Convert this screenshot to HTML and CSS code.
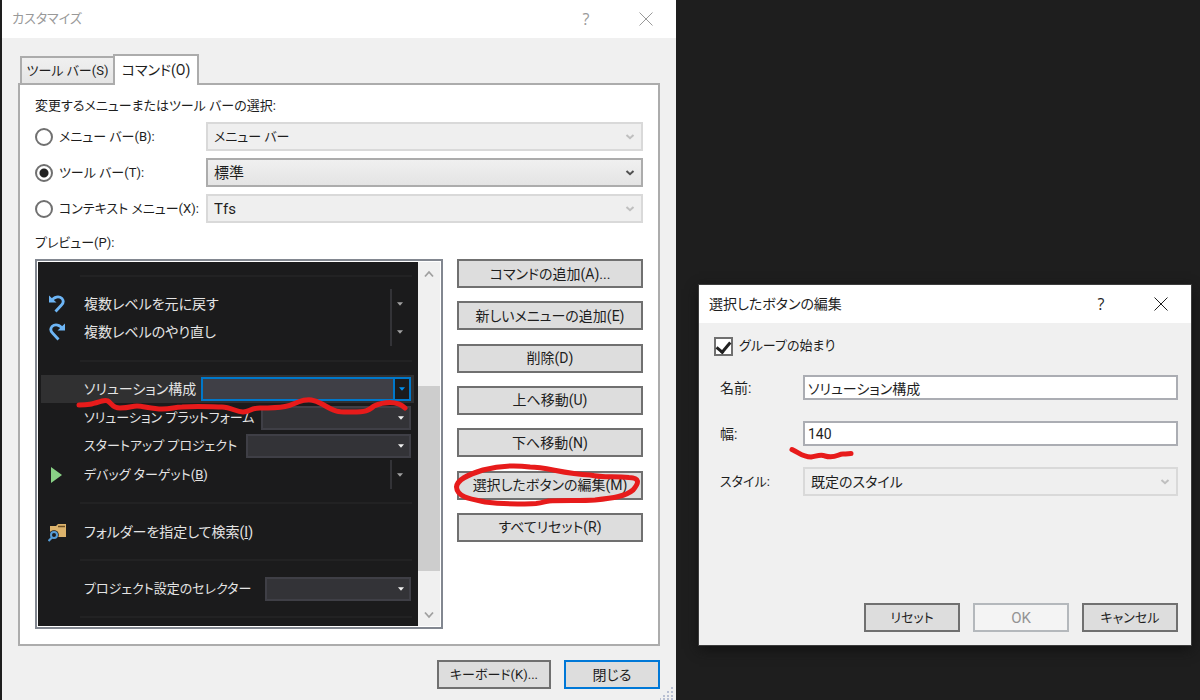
FILE: index.html
```html
<!DOCTYPE html>
<html lang="ja">
<head>
<meta charset="utf-8">
<title>カスタマイズ</title>
<link rel="stylesheet" href="styles.css">
</head>
<body>
<svg class="defs" aria-hidden="true">
  <symbol id="chevron" viewBox="0 0 10 8"><path d="M1.5 2 5 5.2 8.500 2" fill="none" stroke="currentColor" stroke-width="2"/></symbol>
  <symbol id="triangle" viewBox="0 0 6 4"><path d="M0 .3h6L3 3.700z" fill="currentColor"/></symbol>
  <symbol id="close" viewBox="0 0 14 14"><path d="M.5.5l13 13M13.500.5l-13 13" fill="none" stroke="currentColor" stroke-width="1"/></symbol>
  <symbol id="undo" viewBox="0 0 18 20"><path d="M3.500 7C6 2.500 11 1.800 14 4.500c2 2.500 1.500 4.500-.5 6.500L7.500 17.500" fill="none" stroke="currentColor" stroke-width="2.800"/><path d="M1 1.500v7h7.500z" fill="currentColor"/></symbol>
</svg>
<main class="desktop">
  <section class="dialog dialog-main" aria-labelledby="t1">
    <header class="titlebar inactive">
      <h1 id="t1" class="compact">カスタマイズ</h1>
      <button class="caption" aria-label="ヘルプ">?</button>
      <button class="caption" aria-label="閉じる"><svg class="close"><use href="#close"/></svg></button>
    </header>
    <div class="main-body">
      <div class="tabs" role="tablist">
        <button class="tab compact" role="tab">ツール バー(S)</button>
        <button class="tab active" role="tab" aria-selected="true">コマンド(O)</button>
      </div>
      <div class="panel" role="tabpanel">
        <p class="heading compact">変更するメニューまたはツール バーの選択:</p>
        <div class="choices compact">
          <label class="choice"><input type="radio" name="bar"><span>メニュー バー(B):</span></label>
          <div class="combo"><select aria-label="メニュー バー" disabled><option>メニュー バー</option></select><svg><use href="#chevron"/></svg></div>
          <label class="choice"><input type="radio" name="bar" checked><span>ツール バー(T):</span></label>
          <div class="combo enabled"><select class="regular" aria-label="ツール バー"><option>標準</option></select><svg><use href="#chevron"/></svg></div>
          <label class="choice"><input type="radio" name="bar"><span>コンテキスト メニュー(X):</span></label>
          <div class="combo"><select class="regular" aria-label="コンテキスト メニュー" disabled><option>Tfs</option></select><svg><use href="#chevron"/></svg></div>
        </div>
        <p class="preview-label compact">プレビュー(P):</p>
        <div class="commands">
          <div class="preview">
            <div class="list">
              <hr>
              <div class="item"><svg class="icon blue"><use href="#undo"/></svg><span>複数レベルを元に戻す</span><span class="split"><svg><use href="#triangle"/></svg></span></div>
              <div class="item"><svg class="icon blue flip"><use href="#undo"/></svg><span>複数レベルのやり直し</span><span class="split"><svg><use href="#triangle"/></svg></span></div>
              <hr>
              <div class="item selected">
                <label for="config">ソリューション構成</label>
                <div class="dark-combo w210 focus"><select id="config"></select><span class="drop"><svg><use href="#triangle"/></svg></span></div>
                <svg class="mark mark-row" viewBox="73 395 337 20"><path d="M79 405C90 405 92 404 102 401S109 408 120 408 131 406 137 406 152 409 162 409 174 407 182 407C198 406 213 407 222 407S236 412 243 412 250 408 260 408C288 408 291 405 298 402 309 398 315 400 322 404 337 413 339 412 352 412 366 412 368 411 374 406 383 402 397 400 405 408"/></svg>
              </div>
              <div class="item compact"><label for="platform">ソリューション プラットフォーム</label><div class="dark-combo w150"><select id="platform"></select><span class="drop"><svg><use href="#triangle"/></svg></span></div></div>
              <div class="item compact"><label for="startup">スタートアップ プロジェクト</label><div class="dark-combo w165"><select id="startup"></select><span class="drop"><svg><use href="#triangle"/></svg></span></div></div>
              <div class="item"><svg class="icon green" viewBox="0 0 18 20"><path d="M3 2l11 8-11 8z" fill="currentColor"/></svg><span class="compact">デバッグ ターゲット(<u>B</u>)</span><span class="split"><svg><use href="#triangle"/></svg></span></div>
              <hr>
              <div class="item"><svg class="icon" viewBox="0 0 18 20"><path d="M2 4h6l2-2h8v13H2z" fill="#dcb36c"/><path d="M10 4.500h7" stroke="#6b4d22" stroke-width="1.500"/><circle cx="6" cy="13" r="4.800" fill="#1b1b1c"/><circle cx="6" cy="13" r="3" fill="#1b1b1c" stroke="#569cd6" stroke-width="2"/><path d="M4 15.500L.5 19" stroke="#569cd6" stroke-width="2.200"/></svg><span>フォルダーを指定して検索(<u>I</u>)</span></div>
              <hr>
              <div class="item compact"><label for="selector">プロジェクト設定のセレクター</label><div class="dark-combo w146"><select id="selector"></select><span class="drop"><svg><use href="#triangle"/></svg></span></div></div>
              <hr>
            </div>
            <div class="scrollbar">
              <svg viewBox="0 0 10 8"><path d="M1 6.500L5 2l4 4.500" fill="none" stroke="#a0a0a0" stroke-width="1.800"/></svg>
              <div class="thumb"></div>
              <svg viewBox="0 0 10 8"><path d="M1 1.500L5 6l4-4.500" fill="none" stroke="#a0a0a0" stroke-width="1.800"/></svg>
            </div>
          </div>
          <div class="actions">
            <button class="btn">コマンドの追加(A)...</button>
            <button class="btn">新しいメニューの追加(E)</button>
            <button class="btn">削除(D)</button>
            <button class="btn">上へ移動(U)</button>
            <button class="btn">下へ移動(N)</button>
            <div class="marked">
              <button class="btn">選択したボタンの編集(M)</button>
              <svg class="mark mark-oval" viewBox="453 461 190 46"><path d="M548 501C565 500 580 501 595 500 614 498 626 496 633 490 640 482 639 478 629 477.500 612 476 604 478 590 475 563 474 547 467 530 467 508 464 494 467 483 470 467 475 457 480 456.500 487 457 497 470 499 485 502 508 505 522 504 536 503.500 544 503 545 501 550 501"/></svg>
            </div>
            <button class="btn">すべてリセット(R)</button>
          </div>
        </div>
      </div>
      <footer class="footer">
        <button class="btn wide compact">キーボード(K)...</button>
        <button class="btn default">閉じる</button>
      </footer>
    </div>
    <svg class="grip" viewBox="0 0 14 14" aria-hidden="true"><path d="M12 1v2M12 5v2M8 5v2M12 9v2M8 9v2M4 9v2M12 12v2M8 12v2M4 12v2M0 12v2" stroke="#b8bfd2" stroke-width="2"/></svg>
  </section>

  <section class="dialog dialog-edit" aria-labelledby="t2">
    <header class="titlebar">
      <h2 id="t2">選択したボタンの編集</h2>
      <button class="caption" aria-label="ヘルプ">?</button>
      <button class="caption" aria-label="閉じる"><svg class="close"><use href="#close"/></svg></button>
    </header>
    <div class="edit-body">
      <label class="check compact"><input type="checkbox" checked><span>グループの始まり</span></label>
      <div class="fields">
        <label for="name">名前:</label>
        <input id="name" type="text" value="ソリューション構成">
        <label for="width">幅:</label>
        <div class="marked">
          <input id="width" type="text" value="140">
          <svg class="mark mark-width" viewBox="788 446 68 15"><path d="M792 449.500C801 454 803 457 811 457 817 456 821 454 825 456 835 459 838 454 843 454 847 454 849 453.500 851 453.500"/></svg>
        </div>
        <label for="style" class="compact">スタイル:</label>
        <div class="combo"><select id="style" disabled><option>既定のスタイル</option></select><svg><use href="#chevron"/></svg></div>
      </div>
      <footer class="footer compact">
        <button class="btn">リセット</button>
        <button class="btn regular" disabled>OK</button>
        <button class="btn">キャンセル</button>
      </footer>
    </div>
  </section>
</main>
</body>
</html>
```
FILE: styles.css
```css
* { box-sizing: border-box; }

body {
  margin: 0;
  background: #1e1e1e;
  color: #1e1e1e;
  font: 14px/20px Roboto, "Noto Sans CJK JP", sans-serif;
  font-feature-settings: "palt";
}

button, input, select { font: inherit; font-feature-settings: inherit; color: inherit; margin: 0; }
p, h1, h2 { margin: 0; font-size: 14px; font-weight: 400; }
label, span, button { white-space: nowrap; }
.compact { font-size: 13px; }
.regular { font-size: 15px; }
.defs { display: none; }

.desktop {
  display: grid;
  grid-template-columns: 674fr 492fr;
  column-gap: 23px;
  min-height: 100vh;
  padding: 0 9px 0 2px;
}

.dialog { background: #f0f0f0; }
.dialog-main { position: relative; }
.dialog-edit { align-self: start; margin-top: 285px; box-shadow: 0 0 0 1px #3c3c3c, 0 4px 12px #111; }

.titlebar {
  display: flex;
  align-items: center;
  height: 38px;
  padding: 0 0 0 10px;
  background: #fff;
}
.titlebar h1, .titlebar h2 { flex: 1; }
.titlebar.inactive { color: #999; }
.caption {
  display: grid;
  place-items: center;
  width: 60px;
  height: 38px;
  padding: 0;
  border: 0;
  background: none;
  font-family: "Open Sans", sans-serif;
  font-size: 16px;
}
.close { width: 14px; height: 14px; }

.main-body { padding: 16px 16px 11px; }
.tabs { display: flex; align-items: flex-end; padding-left: 2px; }
.tab {
  height: 27px;
  padding: 0;
  width: 93px;
  border: 2px solid #acacac;
  border-width: 2px 0 0 2px;
  background: linear-gradient(#f0f0f0, #e5e5e5);
}
.tab.active {
  position: relative;
  width: 86px;
  height: 31px;
  margin-bottom: -2px;
  padding-bottom: 2px;
  border-right-width: 2px;
  background: #fff;
}

.panel {
  padding: 11px 15px 15px;
  border: 2px solid #acacac;
  background: #fff;
}
.choices {
  display: grid;
  grid-template-columns: 171px 1fr;
  row-gap: 7px;
  margin: 6px 0 10px;
}
.choice, .check { display: flex; align-items: center; }
.choice { gap: 6px; }
.choice input {
  appearance: none;
  flex: none;
  width: 18px;
  height: 18px;
  border: 2px solid #707070;
  border-radius: 50%;
  background: #fff;
}
.choice input:checked { background: radial-gradient(circle, #212121 4px, #fff 5px); }

.combo { display: grid; align-items: center; color: #bfbfbf; }
.combo select {
  grid-area: 1 / 1;
  appearance: none;
  width: 100%;
  height: 29px;
  padding: 0 6px;
  border: 2px solid #d9d9d9;
  border-radius: 0;
  background: #efefef;
  color: #1e1e1e;
  opacity: 1;
}
.combo svg {
  grid-area: 1 / 1;
  justify-self: end;
  width: 10px;
  height: 8px;
  margin-right: 8px;
  pointer-events: none;
}
.combo.enabled { color: #505050; }
.combo.enabled select { border-color: #acacac; background: linear-gradient(#f0f0f0, #e4e4e4); }

.preview-label { margin-bottom: 6px; }
.commands { display: grid; grid-template-columns: minmax(0, 1fr) 186px; gap: 14px; align-items: start; }
.preview {
  display: grid;
  grid-template-columns: minmax(0, 1fr) 22px;
  height: 370px;
  padding: 1px;
  border: 2px solid #828790;
  background: #fff;
}
.list {
  display: grid;
  grid-template-columns: minmax(0, 1fr);
  grid-template-rows: 27px;
  grid-auto-rows: 29px 28px;
  height: 364px;
  overflow: hidden;
  background: #1b1b1c;
  color: #e4e4e4;
}
.list hr {
  align-self: center;
  width: auto;
  height: 2px;
  margin: 0 6px 0 42px;
  border: 0;
  background: #222223;
}
.item {
  position: relative;
  display: flex;
  align-items: center;
  margin: 0 4px 0 3px;
  padding: 0 3px 0 43px;
}
.item.selected { z-index: 1; background: #303031; }
.icon { width: 18px; height: 20px; margin: 0 18px 0 -36px; flex: none; }
.blue { color: #6db5f5; }
.green { color: #89d185; }
.flip { transform: scaleX(-1); }
.split {
  display: grid;
  place-items: center;
  align-self: stretch;
  width: 18px;
  margin-left: auto;
  border-left: 2px solid #333337;
  margin-right: 3px;
  color: #a0a0a0;
}
.split svg, .drop svg { width: 6px; height: 4px; }
.dark-combo {
  display: grid;
  grid-template-columns: minmax(0, 1fr) 16px;
  flex: none;
  height: 24px;
  margin-left: auto;
  border: 2px solid #3f3f46;
  background: #333337;
  color: #f1f1f1;
}
.dark-combo select { appearance: none; min-width: 0; width: 100%; height: 20px; border: 0; border-radius: 0; background: none; }
.drop { display: grid; place-items: center; }
.w210 { width: 210px; }
.w150 { width: 150px; }
.w165 { width: 165px; }
.w146 { width: 146px; }
.dark-combo.focus { border-color: #0078ca; background: #3f3f46; color: #0090f0; }
.focus .drop { border-left: 2px solid #0078ca; background: #1b1b1c; }

.scrollbar { display: flex; flex-direction: column; align-items: center; padding: 8px 0 7px; background: #f0f0f0; }
.scrollbar svg { width: 10px; height: 8px; }
.thumb { width: 100%; height: 185px; margin: 108px 0 auto; background: #cdcdcd; }

.actions { display: grid; align-content: space-between; height: 283px; }
.btn {
  width: 96px;
  height: 29px;
  padding: 0;
  border: 2px solid #707070;
  background: #ddd;
}
.actions .btn { width: 100%; }
.btn.wide { width: 114px; }
.btn.default { border-color: #0078d7; }
.btn:disabled { border-color: #b4b8bc; background: #f4f4f4; color: #939393; }
.footer { display: flex; justify-content: flex-end; gap: 13px; }
.main-body .footer { margin-top: 14px; }
.grip { position: absolute; right: 2px; bottom: 0; width: 14px; height: 14px; }

.marked { position: relative; display: grid; }
.mark { position: absolute; pointer-events: none; overflow: visible; fill: none; stroke: #e71b1b; stroke-width: 5; stroke-linecap: round; stroke-linejoin: round; }
.mark-row { left: 32px; top: 20px; width: 337px; height: 20px; }
.mark-oval { left: -4px; top: -10px; width: 190px; height: 46px; }
.mark-width { left: -15px; top: 25px; width: 68px; height: 15px; }

.edit-body { padding: 13px; }
.check { gap: 6px; padding-left: 2px; }
.check input {
  appearance: none;
  flex: none;
  width: 19px;
  height: 19px;
  border: 2px solid #707070;
  background: #fff;
  display: grid;
  place-items: center;
}
.check input:checked::before {
  content: "";
  width: 6px;
  height: 11px;
  margin-bottom: 3px;
  border: solid #212121;
  border-width: 0 3px 3px 0;
  transform: rotate(40deg);
}
.fields {
  display: grid;
  grid-template-columns: 83px 1fr;
  align-items: center;
  row-gap: 21px;
  margin: 19px 0 107px 8px;
}
.fields > label { margin-right: 8px; }
.fields input {
  width: 100%;
  height: 25px;
  padding: 0 3px;
  border: 2px solid #abadb3;
  background: #fff;
}
```
